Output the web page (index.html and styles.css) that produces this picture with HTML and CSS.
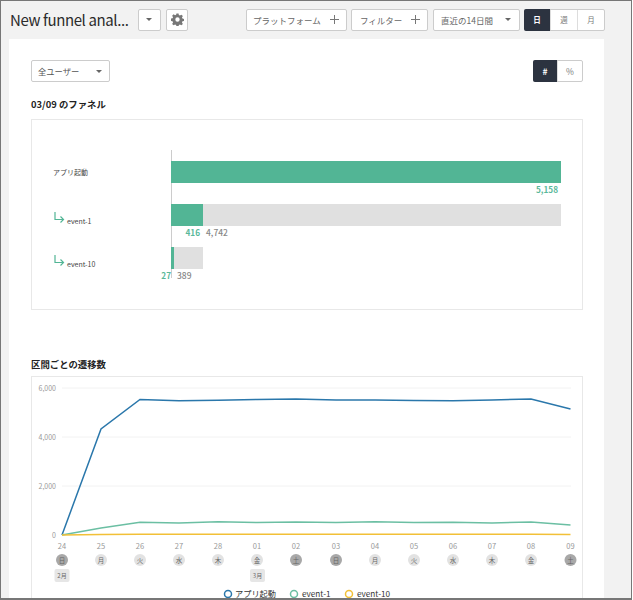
FILE: index.html
```html
<!DOCTYPE html>
<html lang="ja">
<head>
  <meta charset="UTF-8">
  <title>New funnel analysis</title>
  <link rel="stylesheet" href="styles.css">
</head>
<body>
<div class="frame">
  <div class="toolbar">
    <h1 class="title">New funnel anal...</h1>
    <button class="btn btn-caret"><span class="caret"></span></button>
    <button class="btn btn-gear">
      <svg width="13" height="13" viewBox="0 0 16 16"><path fill="#777" fill-rule="evenodd" d="M6.7 0.5h2.6l.4 2 1.3.6 1.8-1.1 1.8 1.8-1.1 1.8.6 1.3 2 .4v2.6l-2 .4-.6 1.3 1.1 1.8-1.8 1.8-1.8-1.1-1.3.6-.4 2H6.700l-.4-2-1.3-.6-1.800 1.100-1.800-1.800 1.100-1.800-.6-1.300-2-.4V6.900l2-.4.6-1.300-1.100-1.800 1.800-1.800 1.800 1.100 1.300-.6zM8 5.300a2.700 2.700 0 1 0 0 5.400 2.700 2.700 0 0 0 0-5.400z"/></svg>
    </button>
    <button class="btn btn-add btn-platform">プラットフォーム <span class="plus"></span></button>
    <button class="btn btn-add btn-filter">フィルター <span class="plus"></span></button>
    <button class="btn btn-range">直近の14日間 <span class="caret"></span></button>
    <div class="seg seg-period">
      <span class="seg-item active">日</span><span class="seg-item">週</span><span class="seg-item">月</span>
    </div>
  </div>

  <div class="card">
    <div class="controls">
      <button class="btn btn-users">全ユーザー <span class="caret"></span></button>
      <div class="seg seg-unit">
        <span class="seg-item active">#</span><span class="seg-item">%</span>
      </div>
    </div>

    <h2 class="heading">03/09 のファネル</h2>
    <div class="box funnel">
      <div class="funnel-rows">
        <div class="funnel-row">
          <div class="funnel-label">アプリ起動</div>
          <div class="track track-full"><div class="fill" style="width:390px"></div></div>
          <div class="values"><span class="val-hit val-end">5,158</span></div>
        </div>
        <div class="funnel-row">
          <div class="funnel-label funnel-label-step">
            <svg class="step" width="14" height="14" viewBox="0 0 14 14"><path d="M2 1v7.500h8M7.500 5.500l3 3-3 3" fill="none" stroke="#52b595" stroke-width="1.200"/></svg>event-1
          </div>
          <div class="track track-full"><div class="fill" style="width:32px"></div></div>
          <div class="values"><span class="val-hit" style="width:29px">416</span><span class="val-miss">4,742</span></div>
        </div>
        <div class="funnel-row">
          <div class="funnel-label funnel-label-step">
            <svg class="step" width="14" height="14" viewBox="0 0 14 14"><path d="M2 1v7.500h8M7.500 5.500l3 3-3 3" fill="none" stroke="#52b595" stroke-width="1.200"/></svg>event-10
          </div>
          <div class="track track-part"><div class="fill" style="width:3px"></div></div>
          <div class="values"><span class="val-hit" style="width:0">27</span><span class="val-miss">389</span></div>
        </div>
      </div>
    </div>

    <h2 class="heading heading-lines">区間ごとの遷移数</h2>
    <div class="box lines">
      <svg class="line-chart" width="550" height="240" viewBox="32 377 550 240">
        <g class="grid">
          <line x1="62" x2="571" y1="388" y2="388"/>
          <line x1="62" x2="571" y1="437" y2="437"/>
          <line x1="62" x2="571" y1="486" y2="486"/>
        </g>
        <g class="y-axis">
          <text x="56" y="391">6,000</text>
          <text x="56" y="440">4,000</text>
          <text x="56" y="489">2,000</text>
          <text x="56" y="538">0</text>
        </g>
        <polyline class="s-blue" points="62,535 101,429 140,399.500 179,400.800 218,400.300 257,399.500 296,399 336,400 375,400 414,400.500 453,400.800 492,400 531,399 570.500,409"/>
        <polyline class="s-teal" points="62,535 101,528 140,522.200 179,523 218,521.800 257,522.500 296,522 336,522.500 375,521.800 414,522.500 453,522.300 492,523 531,522 570.500,525"/>
        <polyline class="s-yellow" points="62,535 101,534.500 140,534.300 179,534.300 218,534.300 257,534.300 296,534.300 336,534.300 375,534.300 414,534.300 453,534.300 492,534.300 531,534.300 570.500,534.500"/>
        <g class="dates">
          <text x="62" y="549">24</text><text x="101" y="549">25</text><text x="140" y="549">26</text><text x="179" y="549">27</text><text x="218" y="549">28</text><text x="257" y="549">01</text><text x="296" y="549">02</text><text x="336" y="549">03</text><text x="375" y="549">04</text><text x="414" y="549">05</text><text x="453" y="549">06</text><text x="492" y="549">07</text><text x="531" y="549">08</text><text x="570.500" y="549">09</text>
        </g>
        <g class="days">
          <circle class="off" cx="62" cy="560" r="6"/><circle cx="101" cy="560" r="6"/><circle cx="140" cy="560" r="6"/><circle cx="179" cy="560" r="6"/><circle cx="218" cy="560" r="6"/><circle cx="257" cy="560" r="6"/><circle class="off" cx="296" cy="560" r="6"/><circle class="off" cx="336" cy="560" r="6"/><circle cx="375" cy="560" r="6"/><circle cx="414" cy="560" r="6"/><circle cx="453" cy="560" r="6"/><circle cx="492" cy="560" r="6"/><circle cx="531" cy="560" r="6"/><circle class="off" cx="570.500" cy="560" r="6"/>
          <text x="62" y="562.500">日</text><text x="101" y="562.500">月</text><text x="140" y="562.500">火</text><text x="179" y="562.500">水</text><text x="218" y="562.500">木</text><text x="257" y="562.500">金</text><text x="296" y="562.500">土</text><text x="336" y="562.500">日</text><text x="375" y="562.500">月</text><text x="414" y="562.500">火</text><text x="453" y="562.500">水</text><text x="492" y="562.500">木</text><text x="531" y="562.500">金</text><text x="570.500" y="562.500">土</text>
        </g>
        <g class="months">
          <rect x="54.500" y="569" width="15" height="13" rx="2"/><rect x="250" y="569" width="15" height="13" rx="2"/>
          <text x="62" y="578">2月</text><text x="257.500" y="578">3月</text>
        </g>
        <g class="legend">
          <circle class="s-blue" cx="228" cy="594" r="3.500"/><text x="235" y="597">アプリ起動</text>
          <circle class="s-teal" cx="294" cy="594" r="3.500"/><text x="302" y="597">event-1</text>
          <circle class="s-yellow" cx="349" cy="594" r="3.500"/><text x="357" y="597">event-10</text>
        </g>
      </svg>
    </div>
  </div>
</div>
</body>
</html>
```

FILE: styles.css
```css
* { box-sizing: border-box; }
html, body { margin: 0; height: 600px; overflow: hidden; }
body { font-family: "Noto Sans CJK JP", "Noto Sans", sans-serif; color: #333; background: #fff; }
.frame { width: 632px; height: 600px; border: 1px solid #777; border-bottom-width: 2px; background: #f2f2f2; overflow: hidden; }

.toolbar { display: flex; align-items: center; height: 38px; padding: 0 0 1px 9px; }
.title { flex: none; width: 128px; margin: 0; font-size: 15px; font-weight: 400; letter-spacing: -0.400px; color: #2b2b2b; white-space: nowrap; }

.btn { flex: none; display: flex; align-items: center; justify-content: space-between; height: 22px; padding: 0 7px 0 6px; background: #fff; border: 1px solid #ccc; border-radius: 2px; font: inherit; font-size: 8.500px; color: #666; white-space: nowrap; }
.caret { width: 0; height: 0; border-left: 3px solid transparent; border-right: 3px solid transparent; border-top: 3px solid #666; }
.plus { width: 9px; height: 9px; margin-left: 6px; background: linear-gradient(#777, #777) center / 9px 1px no-repeat, linear-gradient(#777, #777) center / 1px 9px no-repeat; }
.btn-caret { width: 23px; justify-content: center; margin-right: 5px; }
.btn-gear { width: 22px; justify-content: center; padding: 0; margin-right: 58px; }
.btn-platform { width: 101px; margin-right: 4px; }
.btn-filter { width: 77px; margin-right: 5px; padding-left: 8px; }
.btn-range { width: 87px; margin-right: 4px; padding: 0 8px 0 7px; }

.seg { display: flex; height: 22px; background: #fff; border: 1px solid #ccc; border-radius: 2px; color: #777; }
.seg-item { display: flex; align-items: center; justify-content: center; flex: 1; border-left: 1px solid #ddd; }
.seg-item:first-child { border-left: 0; }
.seg-item.active { background: #2c3340; color: #fff; font-weight: 700; margin: -1px 0 -1px -1px; border-radius: 2px 0 0 2px; }
.seg-period { width: 81px; font-size: 7.500px; }
.seg-unit { width: 50px; font-size: 8.500px; }

.card { width: 595px; height: 570px; margin-left: 8px; padding: 21px 21px 0 22px; background: #fff; }
.controls { display: flex; align-items: center; justify-content: space-between; }
.btn-users { width: 79px; font-size: 8.300px; color: #555; }

.heading { margin: 15px 0 0; font-size: 9.400px; line-height: 15px; font-weight: 700; color: #222; }
.heading-lines { margin-top: 47px; }
.box { width: 552px; border: 1px solid #e8e8e8; }

.funnel { height: 191px; padding: 30px 21px 0; margin-top: 7px; }
.funnel-rows { position: relative; height: 128px; }
.funnel-rows::before { content: ""; position: absolute; left: 118px; top: 0; bottom: 0; width: 1px; background: #ccc; }
.funnel-row { position: relative; display: grid; grid-template-columns: 118px 390px; grid-template-rows: 22px 21px; padding-top: 11px; height: 43px; }
.funnel-label { display: flex; align-items: center; grid-row: 1; font-size: 7px; color: #444; }
.funnel-label-step { padding-top: 11px; }
.step { margin: -5px 0 0 0; }
.track { grid-column: 2; height: 22px; }
.track-full { background: #e0e0e0; }
.track-part { width: 32px; background: #e0e0e0; }
.fill { height: 100%; background: #52b595; }
.values { grid-column: 2; display: flex; align-items: center; height: 10px; margin-top: 1px; font-size: 8.500px; font-weight: 500; line-height: 10px; }
.val-hit { display: flex; justify-content: flex-end; color: #5ab89a; font-weight: 700; font-size: 8.200px; white-space: nowrap; }
.val-end { width: 100%; padding-right: 3px; }
.val-miss { margin-left: 6px; color: #888; }

.lines { margin-top: 4px; height: 240px; }
.line-chart { display: block; }
.line-chart text { font-family: "Noto Sans CJK JP", "Noto Sans", sans-serif; }
.grid line { stroke: #f2f2f2; }
.y-axis text { font-size: 7px; fill: #999; text-anchor: end; }
polyline, .legend circle { fill: none; stroke-width: 1.500; }
.s-blue { stroke: #2a77ab; }
.s-teal { stroke: #6bbfa3; }
.s-yellow { stroke: #f2c037; }
.dates text { font-size: 7.500px; fill: #999; text-anchor: middle; }
.days circle { fill: #e2e2e2; }
.days circle.off { fill: #a8a8a8; }
.days text { font-size: 6.500px; fill: #666; text-anchor: middle; }
.months rect { fill: #e6e6e6; }
.months text { font-size: 6px; fill: #666; text-anchor: middle; }
.legend text { font-size: 8.200px; fill: #333; }
```
